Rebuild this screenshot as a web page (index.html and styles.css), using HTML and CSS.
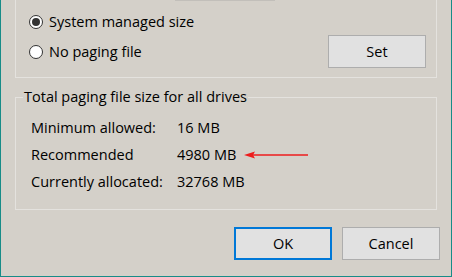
FILE: index.html
```html
<!DOCTYPE html>
<html>
<head>
<meta charset="utf-8">
<link rel="stylesheet" href="styles.css">
</head>
<body>
<div class="window">
  <div class="group-top">
    <div class="edit-edge"></div>
    <label class="radio-row first"><span class="radio checked"></span><span>System managed size</span></label>
    <div class="row2">
      <label class="radio-row"><span class="radio"></span><span>No paging file</span></label>
      <button class="btn">Set</button>
    </div>
  </div>
  <fieldset class="totals">
    <legend>Total paging file size for all drives</legend>
    <div class="stats">
      <span>Minimum allowed:</span><span>16 MB</span>
      <span>Recommended</span><span class="rec"><span class="val">4980 MB</span><svg class="arrow" width="64" height="8" viewBox="0 0 64 8"><line x1="9" y1="4" x2="64" y2="4" stroke="#ee1c1c" stroke-width="1.6"/><path d="M0 4 L11 0.5 L9 4 L11 7.5 Z" fill="#ee1c1c"/></svg></span>
      <span>Currently allocated:</span><span>32768 MB</span>
    </div>
  </fieldset>
  <div class="actions">
    <button class="btn ok">OK</button>
    <button class="btn">Cancel</button>
  </div>
</div>
</body>
</html>
```
FILE: styles.css
```css
html, body {
  margin: 0;
  padding: 0;
  background: #d4d0c9;
}
.window {
  width: 452px;
  height: 277px;
  box-sizing: border-box;
  border: 1px solid #178c88;
  border-top: none;
  background: #d4d0c9;
  font-family: "Open Sans", "Noto Sans", sans-serif;
  font-size: 14.5px;
  line-height: 20px;
  color: #000;
  display: flex;
  flex-direction: column;
  overflow: hidden;
}
.group-top {
  height: 78px;
  box-sizing: border-box;
  margin: 0 14px;
  border: 1px solid #e4e2de;
  border-top: none;
  padding: 0 10px 0 13px;
  display: flex;
  flex-direction: column;
}
.edit-edge {
  height: 1px;
  width: 100px;
  margin-left: 146px;
  background: #c2bfba;
}
.radio-row {
  display: flex;
  align-items: center;
  gap: 6px;
  height: 20px;
}
.radio-row.first {
  margin-top: 11px;
}
.radio {
  width: 14px;
  height: 14px;
  box-sizing: border-box;
  border: 1px solid #333;
  border-radius: 50%;
  background: #fff;
  display: flex;
  align-items: center;
  justify-content: center;
}
.radio.checked::after {
  content: "";
  width: 8px;
  height: 8px;
  border-radius: 50%;
  background: #333;
}
.row2 {
  margin-top: 3px;
  display: flex;
  align-items: center;
  justify-content: space-between;
}
.btn {
  width: 98px;
  height: 33px;
  box-sizing: border-box;
  border: 1px solid #adadad;
  background: #e1e1e1;
  font: inherit;
  color: #000;
  padding: 0;
  margin: 0;
}
.btn.ok {
  border: 2px solid #0078d7;
}
.totals {
  margin: 9px 14px 0;
  padding: 0 0 14px 0;
  border: 1px solid #e4e2de;
  min-width: 0;
}
.totals legend {
  margin-left: 7px;
  padding: 0 1px;
  line-height: 20px;
}
.stats {
  margin-top: 7px;
  padding-left: 15px;
  display: grid;
  grid-template-columns: 146px auto;
  grid-auto-rows: 27px;
  align-items: center;
}
.rec {
  display: flex;
  align-items: center;
}
.val {
  width: 67px;
}
.actions {
  margin-top: 17px;
  padding-right: 11px;
  display: flex;
  justify-content: flex-end;
  gap: 10px;
}
```
